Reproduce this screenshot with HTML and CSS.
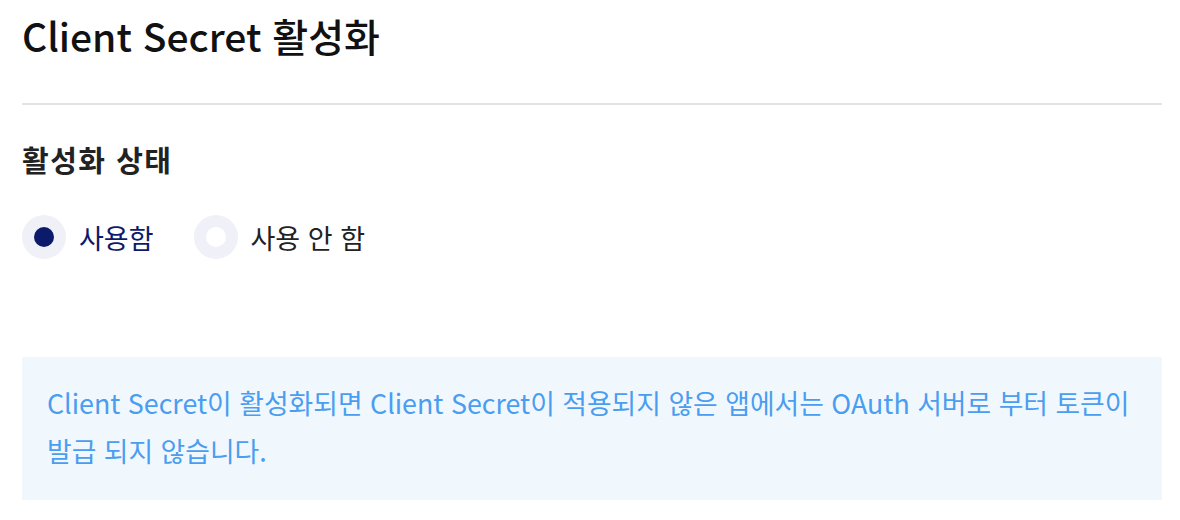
FILE: index.html
```html
<!DOCTYPE html>
<html lang="ko">
<head>
    <meta charset="UTF-8">
    <meta name="viewport" content="width=device-width, initial-scale=1.0">
    <title>Client Secret 활성화</title>
    <link rel="stylesheet" href="styles.css">
</head>
<body>
    <div class="page">
        <h1 class="title">Client Secret 활성화</h1>

        <section class="section">
            <h2 class="section-title">활성화 상태</h2>
            <div class="radio-group">
                <label class="radio checked">
                    <span class="radio-mark"></span>
                    <span class="radio-label">사용함</span>
                </label>
                <label class="radio">
                    <span class="radio-mark"></span>
                    <span class="radio-label">사용 안 함</span>
                </label>
            </div>
        </section>

        <div class="notice">
            Client Secret이 활성화되면 Client Secret이 적용되지 않은 앱에서는 OAuth 서버로 부터 토큰이<br>
            발급 되지 않습니다.
        </div>
    </div>
</body>
</html>
```

FILE: styles.css
```css
body {
    margin: 0;
    font-family: "Noto Sans CJK KR", "Noto Sans", sans-serif;
    background: #fff;
    color: #111;
}
.page {
    width: 1140px;
    padding: 0 0 0 22px;
}
.title {
    margin: 0;
    padding: 7px 0 40px;
    font-size: 39px;
    font-weight: 500;
    line-height: 56px;
    color: #111;
    border-bottom: 2px solid #e3e3e3;
}
.section {
    padding-top: 36px;
}
.section-title {
    margin: 0;
    font-size: 29px;
    font-weight: 700;
    letter-spacing: 1.5px;
    line-height: 36px;
    color: #222;
}
.radio-group {
    display: flex;
    gap: 40px;
    margin-top: 38px;
}
.radio {
    display: flex;
    align-items: center;
    gap: 13px;
    cursor: pointer;
}
.radio-mark {
    width: 44px;
    height: 44px;
    border-radius: 50%;
    background: #f0f1f8;
    display: flex;
    align-items: center;
    justify-content: center;
}
.radio-mark::after {
    content: "";
    width: 20px;
    height: 20px;
    border-radius: 50%;
    background: #fff;
}
.radio.checked .radio-mark::after {
    background: #0b1a6b;
}
.radio-label {
    font-size: 27px;
    color: #222;
}
.radio.checked .radio-label {
    color: #0b1a6b;
}
.notice {
    margin-top: 98px;
    background: #f1f8fd;
    padding: 22px 10px 25px 25px;
    font-size: 26.8px;
    line-height: 48px;
    color: #4a9df0;
}
```
